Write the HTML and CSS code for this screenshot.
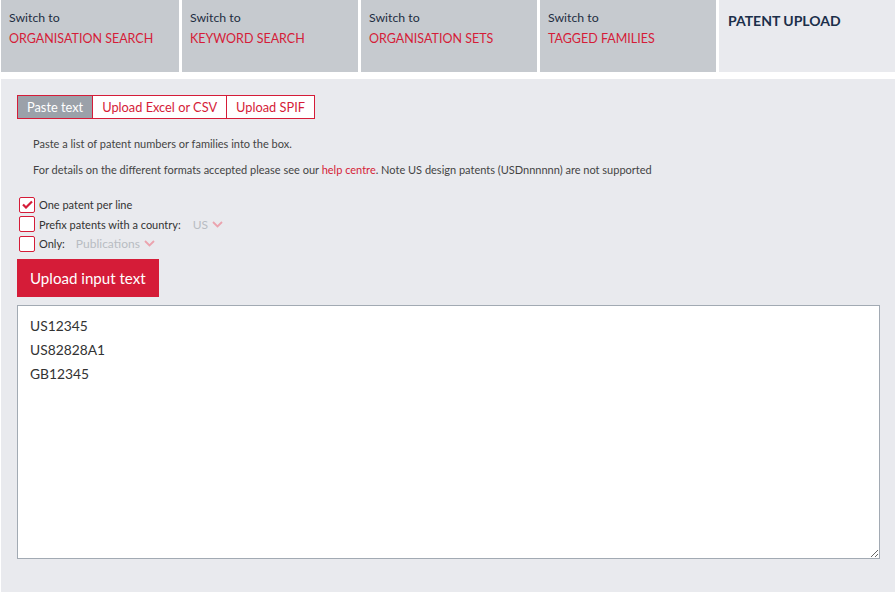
FILE: index.html
```html
<!DOCTYPE html>
<html lang="en">
<head>
    <meta charset="UTF-8">
    <title>Patent Upload</title>
    <link rel="stylesheet" href="styles.css">
</head>
<body>
    <div class="tabs">
        <div class="tab">
            <div class="tab-switch">Switch to</div>
            <div class="tab-name">ORGANISATION SEARCH</div>
        </div>
        <div class="tab">
            <div class="tab-switch">Switch to</div>
            <div class="tab-name">KEYWORD SEARCH</div>
        </div>
        <div class="tab">
            <div class="tab-switch">Switch to</div>
            <div class="tab-name">ORGANISATION SETS</div>
        </div>
        <div class="tab">
            <div class="tab-switch">Switch to</div>
            <div class="tab-name">TAGGED FAMILIES</div>
        </div>
        <div class="tab tab-current">
            <div class="tab-title">PATENT UPLOAD</div>
        </div>
    </div>

    <div class="content">
        <div class="modes">
            <div class="mode active">Paste text</div>
            <div class="mode">Upload Excel or CSV</div>
            <div class="mode">Upload SPIF</div>
        </div>

        <p class="hint">Paste a list of patent numbers or families into the box.</p>
        <p class="hint">For details on the different formats accepted please see our <a href="#" class="link">help centre</a>. Note US design patents (USDnnnnnn) are not supported</p>

        <div class="options">
            <label class="option">
                <span class="checkbox checked">
                    <svg width="11" height="9" viewBox="0 0 11 9"><path d="M1 4.5 L4 7.5 L10 1.5" fill="none" stroke="#d51c38" stroke-width="2.2"/></svg>
                </span>
                One patent per line
            </label>
            <label class="option">
                <span class="checkbox"></span>
                Prefix patents with a country:
                <span class="select">US <svg class="chev" width="11" height="7" viewBox="0 0 11 7"><path d="M1 1 L5.5 5.5 L10 1" fill="none" stroke="#eba3ae" stroke-width="1.8"/></svg></span>
            </label>
            <label class="option">
                <span class="checkbox"></span>
                Only:
                <span class="select select-wide">Publications <svg class="chev" width="11" height="7" viewBox="0 0 11 7"><path d="M1 1 L5.5 5.5 L10 1" fill="none" stroke="#eba3ae" stroke-width="1.8"/></svg></span>
            </label>
        </div>

        <button class="upload-btn">Upload input text</button>

        <textarea class="input-box">US12345
US82828A1
GB12345</textarea>
    </div>
</body>
</html>
```

FILE: styles.css
```css
* {
    margin: 0;
    padding: 0;
    box-sizing: border-box;
}

body {
    font-family: Lato, "Liberation Sans", sans-serif;
    background-color: #fff;
    padding: 0 1px;
    height: 592px;
    display: flex;
    flex-direction: column;
}

.tabs {
    display: flex;
    gap: 3px;
    height: 72px;
    margin-bottom: 7px;
}

.tab {
    flex: 1;
    background-color: #c6cacf;
    padding: 10px 8px;
}

.tab:first-child {
    flex: 0 0 178px;
}

.tab-current {
    background-color: #e9eaee;
}

.tab-switch {
    font-size: 12.3px;
    color: #1e2d42;
    margin-bottom: 6px;
}

.tab-name {
    font-size: 12.5px;
    color: #d51c38;
}

.tab-title {
    font-size: 14px;
    font-weight: bold;
    color: #1b2f4a;
    padding-top: 2px;
    padding-left: 1px;
}

.content {
    flex: 1;
    background-color: #e9eaee;
    padding: 16px 15px 33px 16px;
    display: flex;
    flex-direction: column;
}

.modes {
    display: flex;
    align-self: flex-start;
    border: 1px solid #d51c38;
    margin-bottom: 18px;
}

.mode {
    font-size: 12.8px;
    color: #d51c38;
    background-color: #fff;
    padding: 3px 9px;
    height: 22px;
    line-height: 16px;
    border-left: 1px solid #d51c38;
}

.mode:first-child {
    border-left: none;
}

.mode.active {
    background-color: #9ba1a9;
    color: #fff;
}

.hint {
    font-size: 11px;
    color: #444;
    padding-left: 16px;
    margin-bottom: 12px;
    line-height: 14px;
}

.link {
    color: #d51c38;
    text-decoration: none;
}

.options {
    display: flex;
    flex-direction: column;
    gap: 4.5px;
    margin-top: 8px;
    padding-left: 2px;
    margin-bottom: 8px;
}

.option {
    display: flex;
    align-items: center;
    font-size: 11px;
    color: #333;
    height: 15px;
}

.checkbox {
    width: 16px;
    height: 16px;
    border: 1px solid #d51c38;
    border-radius: 2px;
    background-color: #fff;
    margin-right: 4px;
    display: flex;
    align-items: center;
    justify-content: center;
}

.select {
    color: #b8bcc2;
    font-size: 12px;
    margin-left: 12px;
    display: flex;
    align-items: center;
    gap: 4px;
}

.select-wide {
    margin-left: 11px;
}

.upload-btn {
    align-self: flex-start;
    background-color: #d51c38;
    color: #fff;
    border: none;
    font-family: inherit;
    font-size: 15.1px;
    padding: 0 13px;
    height: 38px;
    margin-bottom: 8px;
}

.input-box {
    flex: 1;
    width: 100%;
    border: 1px solid #a2aab3;
    background-color: #fff;
    font-family: inherit;
    font-size: 13.8px;
    line-height: 24px;
    color: #333;
    padding: 8px 12px;
    resize: both;
    outline: none;
}
```
